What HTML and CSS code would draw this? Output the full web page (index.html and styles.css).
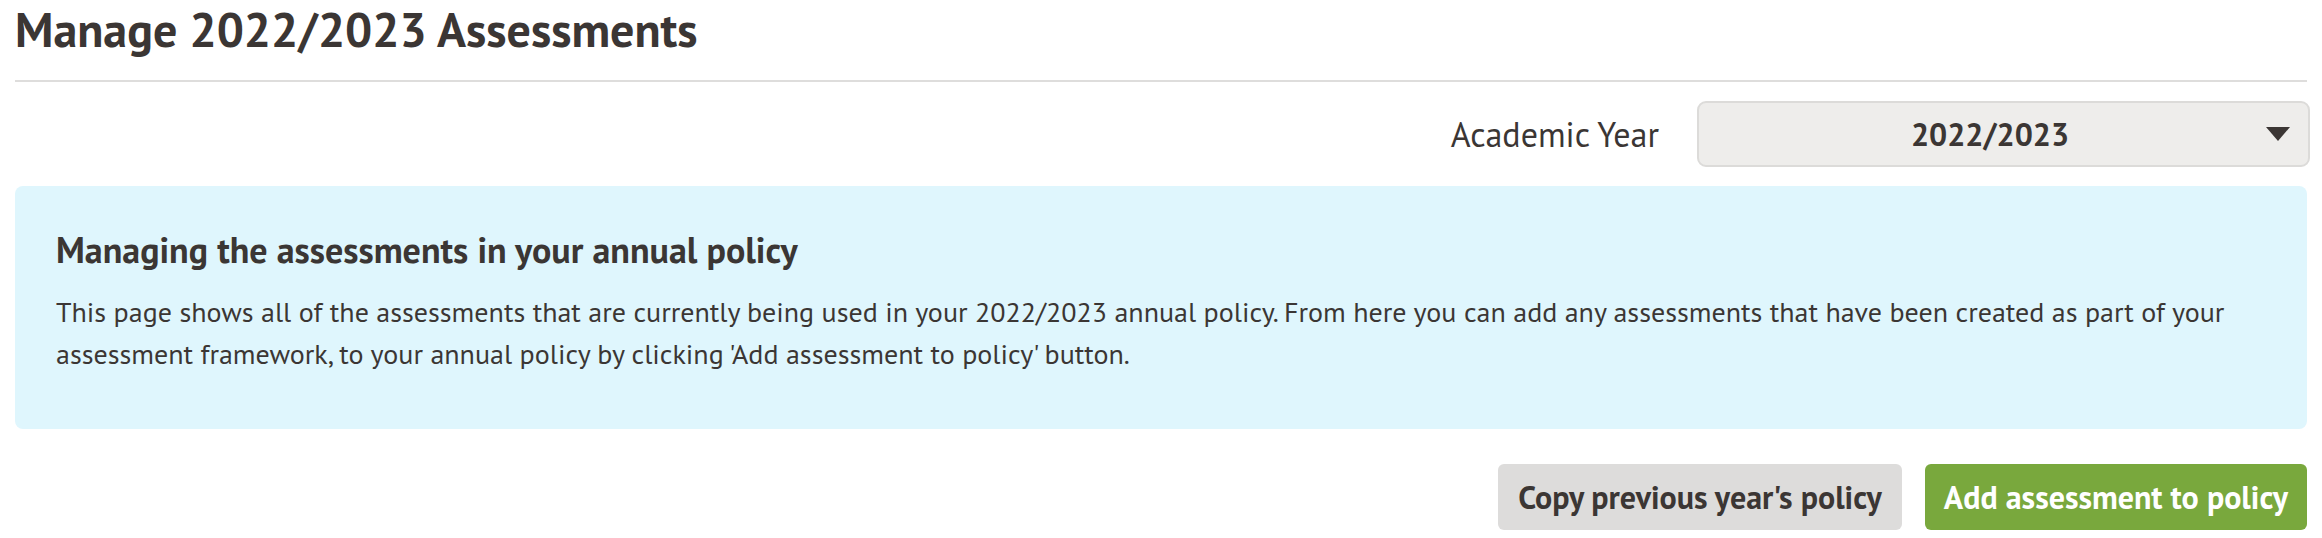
FILE: index.html
```html
<!DOCTYPE html>
<html>
<head>
<meta charset="utf-8">
<link rel="stylesheet" href="styles.css">
</head>
<body>
<div class="page">
  <h1 class="title">Manage 2022/2023 Assessments</h1>
  <div class="toolbar">
    <label class="field-label">Academic Year</label>
    <div class="select">
      <span class="select-value">2022/2023</span>
      <span class="caret"></span>
    </div>
  </div>
  <div class="info">
    <h2 class="info-title">Managing the assessments in your annual policy</h2>
    <p class="info-text">This page shows all of the assessments that are currently being used in your 2022/2023 annual policy. From here you can add any assessments that have been created as part of your assessment framework, to your annual policy by clicking 'Add assessment to policy' button.</p>
  </div>
  <div class="actions">
    <button class="btn btn-grey">Copy previous year's policy</button>
    <button class="btn btn-green">Add assessment to policy</button>
  </div>
</div>
</body>
</html>
```
FILE: styles.css
```css
* { box-sizing: border-box; }
body { margin: 0; background: #fff; color: #3b3634; font-family: "PT Sans", "Lato", sans-serif; }
.page { padding: 0 15px; }
.title { margin: 0; font-size: 48px; font-weight: 700; line-height: 58px; padding: 0 0 22px; border-bottom: 2px solid #dedddc; }
.toolbar { display: flex; justify-content: flex-end; align-items: center; gap: 38px; margin-top: 19px; margin-right: -3px; }
.field-label { font-size: 34px; line-height: 40px; }
.select { width: 613px; height: 66px; background: #eeedeb; border: 2px solid #dcdbd9; border-radius: 9px; display: flex; align-items: center; justify-content: center; position: relative; }
.select-value { font-size: 32px; font-weight: 700; margin-right: 27px; }
.caret { position: absolute; right: 18px; top: 24px; width: 0; height: 0; border-left: 12.5px solid transparent; border-right: 12.5px solid transparent; border-top: 14px solid #3b3634; }
.info { margin-top: 19px; background: #dff6fd; border-radius: 8px; padding: 41px 41px 54px; }
.info-title { margin: 0 0 18px; font-size: 36px; font-weight: 700; line-height: 46px; }
.info-text { margin: 0; font-size: 28px; line-height: 42px; }
.actions { display: flex; justify-content: flex-end; gap: 23px; margin-top: 35px; }
.btn { height: 66px; border: 0; border-radius: 6px; font-family: inherit; font-size: 32px; font-weight: 700; padding: 0 20px; }
.btn-grey { background: #dddcdb; color: #3b3634; }
.btn-green { background: #79a83d; color: #fff; padding: 0 19px; }
```
